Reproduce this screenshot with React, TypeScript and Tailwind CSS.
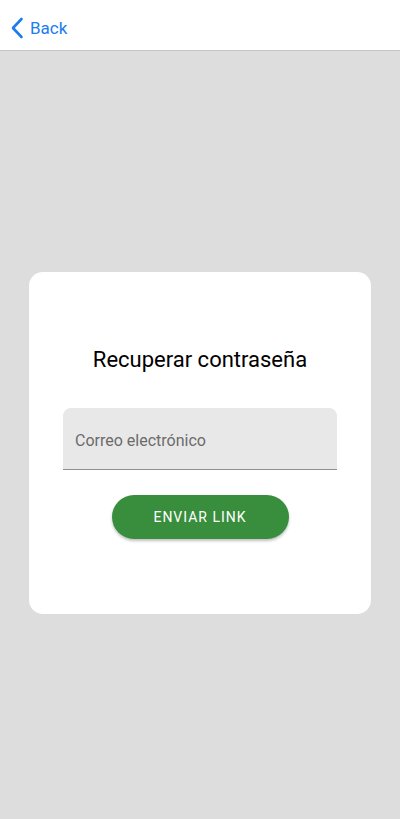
import React from "react";

function Header() {
  return (
    <div className="flex h-[51px] items-end border-b border-[#c6c6c8] bg-white px-[10px] pb-[11px]">
      <button className="flex items-center gap-[6px] text-[#1b7cf2]">
        <svg width="14" height="22" viewBox="0 0 14 22" fill="none">
          <path
            d="M11.5 2 L3 11 L11.5 20"
            stroke="currentColor"
            strokeWidth="2.6"
            strokeLinecap="round"
            strokeLinejoin="round"
          />
        </svg>
        <span className="text-[17px] leading-none">Back</span>
      </button>
    </div>
  );
}

export default function App() {
  return (
    <div
      className="flex min-h-[819px] flex-col bg-[#dddddd]"
      style={{ fontFamily: "Roboto, 'Liberation Sans', sans-serif" }}
    >
      <Header />
      <div className="flex flex-1 items-center justify-center px-[29px] pt-[16px]">
        <div className="flex h-[342px] w-full flex-col items-center rounded-[14px] bg-white px-[34px] pt-[74px]">
          <h1 className="text-[22px] leading-[28px] text-black">Recuperar contraseña</h1>
          <div className="mt-[34px] flex h-[62px] w-full items-center rounded-t-[8px] border-b border-[#8f8f8f] bg-[#e8e8e8] px-[12px] pt-[4px]">
            <span className="text-[16px] text-[#6b6b6b]">Correo electrónico</span>
          </div>
          <button className="mt-[25px] flex h-[44px] w-[177px] items-center justify-center rounded-full bg-[#388e3c] text-[14px] tracking-[1px] text-white shadow-[0_2px_3px_rgba(0,0,0,0.25)]">
            ENVIAR LINK
          </button>
        </div>
      </div>
    </div>
  );
}
